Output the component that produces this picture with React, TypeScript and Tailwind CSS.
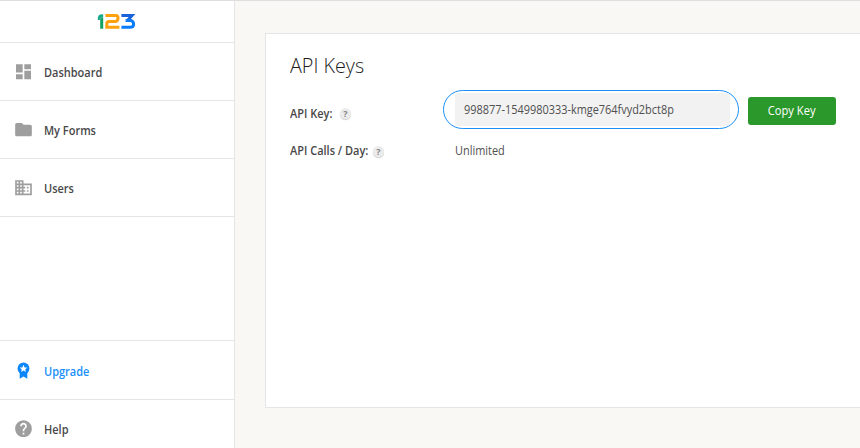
import React from "react";

const Logo = () => (
  <svg width="39" height="16" viewBox="0 0 39 16" className="block">
    <path d="M0.8 7 V5.6 Q0.8 1.2 5.2 1.2 H6.2 V4 Q3.2 4.4 2.8 7 Z" fill="#18aa8a" />
    <path d="M3.2 6 Q3.8 4.6 6.2 4.3 V15.8 H3.2 Z" fill="#12a25f" />
    <path d="M8.4 2.6 H18.8 Q21 2.6 21 5.2 Q21 8.5 18 8.5 H12 Q9.8 8.5 9.8 11 V14.3 H22.4" fill="none" stroke="#ffa10c" strokeWidth="3" />
    <path d="M24.4 2.6 H35 L30.5 7.6" fill="none" stroke="#1b62dc" strokeWidth="3" />
    <path d="M24.4 14.3 H33 Q36.6 14.3 36.6 11.2 Q36.6 8.6 34.2 7.6 H28.6" fill="none" stroke="#0a7cff" strokeWidth="3" />
  </svg>
);

const paths = {
  dashboard: "M3 13h8V3H3v10zm0 8h8v-6H3v6zm10 0h8V11h-8v10zm0-18v6h8V3h-8z",
  folder: "M10 4H4c-1.1 0-1.99.9-1.99 2L2 18c0 1.1.9 2 2 2h16c1.1 0 2-.9 2-2V8c0-1.1-.9-2-2-2h-8l-2-2z",
  users:
    "M12 7V3H2v18h20V7H12zM6 19H4v-2h2v2zm0-4H4v-2h2v2zm0-4H4V9h2v2zm0-4H4V5h2v2zm4 12H8v-2h2v2zm0-4H8v-2h2v2zm0-4H8V9h2v2zm0-4H8V5h2v2zm10 12h-8v-2h2v-2h-2v-2h2v-2h-2V9h8v10zm-2-8h-2v2h2v-2zm0 4h-2v2h2v-2z",
  help: "M12 2C6.48 2 2 6.48 2 12s4.48 10 10 10 10-4.48 10-10S17.52 2 12 2zm1 17h-2v-2h2v2zm2.07-7.75l-.9.92C13.45 12.9 13 13.5 13 15h-2v-.5c0-1.1.45-2.1 1.17-2.83l1.24-1.26c.37-.36.59-.86.59-1.41 0-1.1-.9-2-2-2s-2 .9-2 2H8c0-2.21 1.79-4 4-4s4 1.79 4 4c0 .88-.36 1.68-.93 2.25z",
};

const Icon = ({ d }: { d: string }) => (
  <svg width="20" height="20" viewBox="0.6 0.4 24 24" fill="#9e9e9e" className="shrink-0">
    <path d={d} />
  </svg>
);

const Award = () => (
  <svg width="20" height="20" viewBox="0.5 0.5 20 20" className="shrink-0">
    <path d="M6.2 11 H13.8 V18.2 L10 15.9 L6.2 18.2 Z" fill="#0b87fb" />
    <circle cx="10" cy="8" r="5.9" fill="#0b87fb" />
    <path d="M10 4.3 L11.1 6.9 L13.8 7.1 L11.7 8.9 L12.4 11.6 L10 10.1 L7.6 11.6 L8.3 8.9 L6.2 7.1 L8.9 6.9 Z" fill="#fff" />
  </svg>
);

const Row = ({ icon, label, className = "" }: { icon: React.ReactNode; label: string; className?: string }) => (
  <div className={`flex shrink-0 items-center gap-[10px] pl-[13.5px] font-semibold ${className}`}>
    {icon}
    <span className="origin-left scale-x-[0.915] pt-[2px] leading-4">{label}</span>
  </div>
);

const Hint = () => (
  <span className="flex h-[11px] w-[11px] shrink-0 items-center justify-center rounded-full bg-[#ececec] text-[9px] leading-none font-bold text-[#858585] shadow-[0_1px_1px_#d0d0d0]">
    ?
  </span>
);

export default function App() {
  return (
    <div className="flex h-[448px] w-[860px] overflow-hidden border-t border-[#dedede] bg-[#f9f8f4] font-['Open_Sans','Noto_Sans',sans-serif] text-[12px] whitespace-nowrap text-[#484848]">
      <aside className="flex w-[235px] shrink-0 flex-col border-r border-[#e6e6e6] bg-white">
        <div className="flex h-[42px] shrink-0 justify-center border-b border-[#e6e6e6] pt-3 pr-[2px]">
          <Logo />
        </div>
        <Row icon={<Icon d={paths.dashboard} />} label="Dashboard" className="h-[58px] border-b border-[#e6e6e6]" />
        <Row icon={<Icon d={paths.folder} />} label="My Forms" className="h-[58px] border-b border-[#e6e6e6]" />
        <Row icon={<Icon d={paths.users} />} label="Users" className="h-[58px] border-b border-[#e6e6e6]" />
        <div className="h-[124px] shrink-0 border-b border-[#e6e6e6]" />
        <Row icon={<Award />} label="Upgrade" className="h-[59px] border-b border-[#e6e6e6] pt-[2px] text-[#1a8ffb]" />
        <Row icon={<Icon d={paths.help} />} label="Help" className="h-[58px]" />
      </aside>
      <main className="flex-1 pt-8 pl-[30px]">
        <section className="h-[375px] border border-r-0 border-[#e6e6e6] bg-white pt-[18px] pl-[24px]">
          <h1 className="origin-left scale-x-[0.94] text-[21px] leading-[26px] font-light text-[#1c1c1c]">API Keys</h1>
          <div className="mt-[12px] flex h-[39px]">
            <div className="flex w-[153px] shrink-0 items-center pt-[8px] font-semibold">
              <span className="w-[50px] origin-left scale-x-[0.915]">API Key:</span>
              <Hint />
            </div>
            <div className="flex h-[39px] w-[296px] shrink-0 items-center rounded-full border border-[#1b8ff5] px-[11px]">
              <div className="flex h-[33px] w-[275px] shrink-0 items-center rounded-[3px] bg-[#f2f2f2] pl-[9px] text-[#505050]">
                <span className="origin-left scale-x-[0.91]">998877-1549980333-kmge764fvyd2bct8p</span>
              </div>
            </div>
            <button className="mt-[7px] ml-[9px] h-[28px] w-[88px] rounded-[3px] bg-[#2b982b] text-[12px] font-medium text-white">
              <span className="inline-block scale-x-[0.93]">Copy Key</span>
            </button>
          </div>
          <div className="mt-[13px] flex h-[18px] items-center">
            <div className="flex w-[165px] items-center font-semibold">
              <span className="w-[83px] origin-left scale-x-[0.915]">API Calls / Day:</span>
              <Hint />
            </div>
            <span className="origin-left scale-x-[0.91] text-[#505050]">Unlimited</span>
          </div>
        </section>
      </main>
    </div>
  );
}
